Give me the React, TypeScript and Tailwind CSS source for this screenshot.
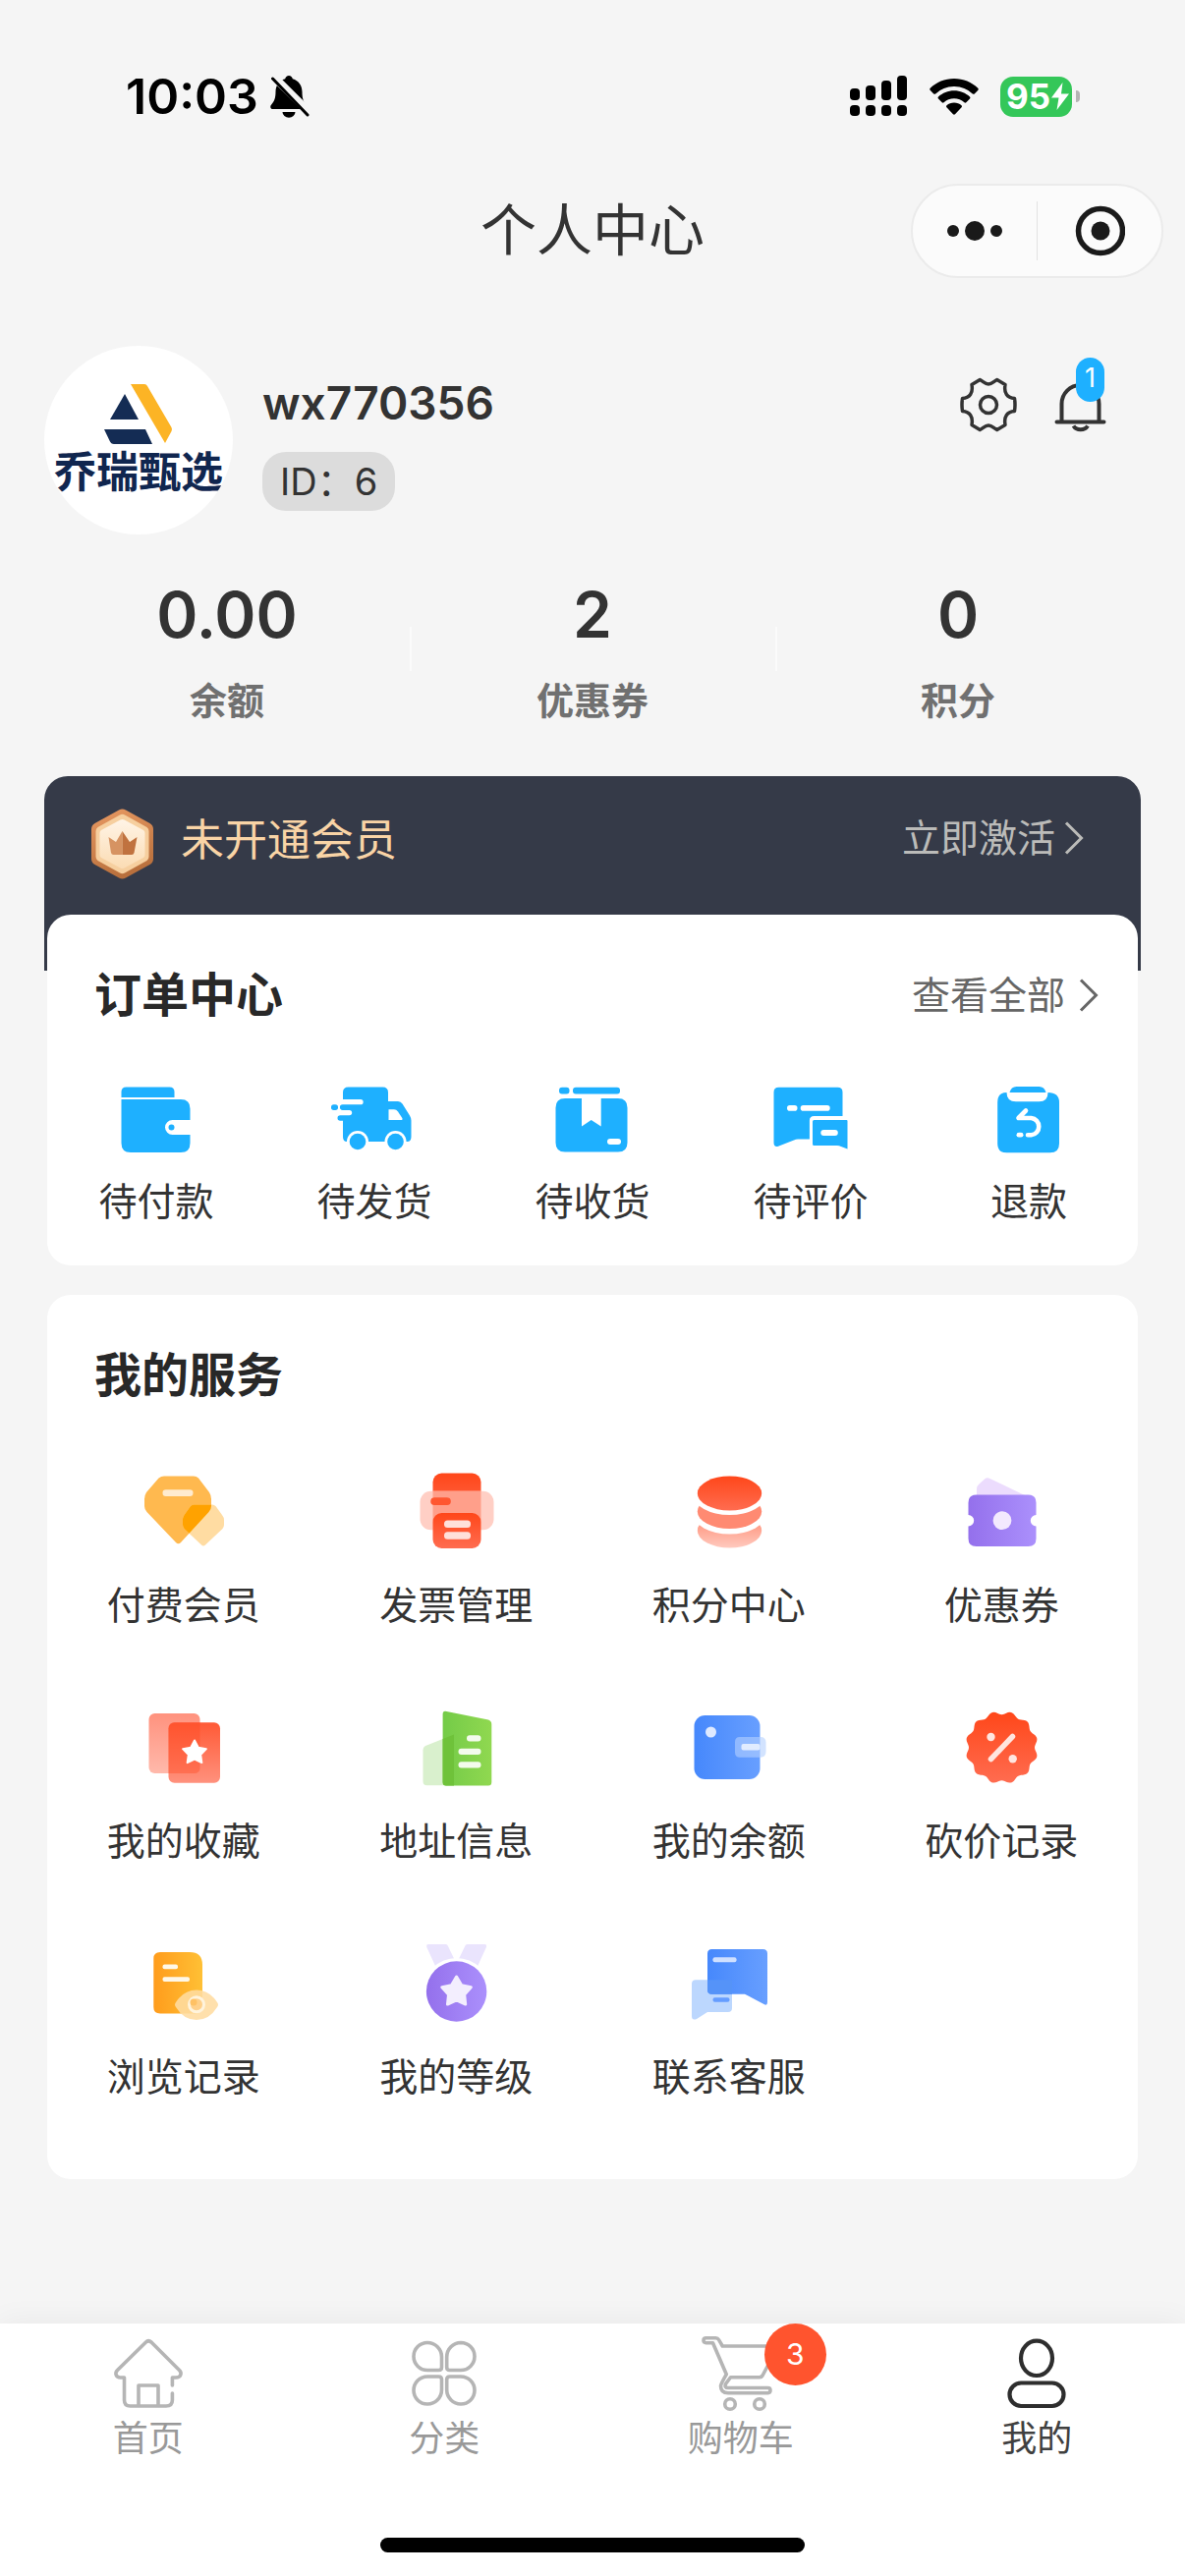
import type { ReactNode } from "react";

interface IconItem {
  label: string;
  icon: ReactNode;
}

const BLUE = "#1eb0ff";

function Chevron({ className }: { className?: string }) {
  return (
    <svg className={className} width="20" height="34" viewBox="0 0 20 34" fill="none" stroke="currentColor" strokeWidth="3">
      <path d="M2 1.5 17.5 17 2 32.5" />
    </svg>
  );
}

/* ---------- status bar ---------- */

function MutedBell() {
  return (
    <svg width="40" height="43" viewBox="0 0 40 43">
      <path d="M19 0c2 0 3.400 1.300 3.800 3.200C29 5 32.500 10 32.500 16.500c0 7 1.500 10.500 4 13.200 1.600 1.800 1.500 4.300-1 4.300H3c-2.800 0-3.600-2.600-1.800-4.500C4 26.500 5.500 23 5.500 16.500 5.500 10 9 5 15.200 3.200 15.600 1.300 17 0 19 0Z" />
      <path d="M12.500 37h13a6.500 5.700 0 0 1-13 0Z" />
      <path d="M1 -1.500 40 37.500" stroke="#f5f5f5" strokeWidth="8" />
      <path d="M2.500 3 38 40" stroke="#000" strokeWidth="3" strokeLinecap="round" />
    </svg>
  );
}

function Signal() {
  return (
    <svg width="59" height="42" viewBox="0 0 59 42">
      <rect x="0" y="13" width="10" height="12" rx="4" />
      <rect x="16" y="10" width="10" height="15" rx="4" />
      <rect x="32" y="5" width="10" height="20" rx="4" />
      <rect x="48" y="0" width="10" height="25" rx="4" />
      <rect x="0" y="30" width="10" height="11" rx="4" />
      <rect x="16" y="30" width="10" height="11" rx="4" />
      <rect x="32" y="30" width="10" height="11" rx="4" />
      <rect x="48" y="30" width="10" height="11" rx="4" />
    </svg>
  );
}

function Wifi() {
  return (
    <svg width="50" height="37" viewBox="0 0 50 37">
      <path d="M25 0c9.500 0 18 3.700 24.300 9.700.6.600.6 1.500.1 2l-3.600 3.700c-.6.500-1.400.5-2 0A26.600 26.600 0 0 0 25 7.900 26.600 26.600 0 0 0 6.200 15.400c-.6.500-1.400.5-2 0L.6 11.700c-.5-.5-.5-1.400.1-2C7 3.700 15.500 0 25 0Z" />
      <path d="M25 12.300c6.200 0 11.800 2.400 16 6.200.6.600.6 1.500 0 2.100l-3.700 3.600c-.5.600-1.300.6-1.900.1A15.500 15.500 0 0 0 25 20.200c-4 0-7.600 1.500-10.400 4.100-.6.500-1.400.5-1.900-.1L9 20.600c-.6-.6-.6-1.500 0-2.100 4.200-3.800 9.800-6.200 16-6.200Z" />
      <path d="M25 24.500c2.900 0 5.500 1 7.500 2.800.6.600.6 1.400.1 2l-6.600 6.900c-.6.600-1.400.6-2 0l-6.600-6.900c-.5-.6-.5-1.400.1-2 2-1.800 4.600-2.800 7.500-2.800Z" />
    </svg>
  );
}

function StatusBar() {
  return (
    <div className="flex h-[128px] items-center justify-between pt-[68px] pr-[107px] pl-[128px]">
      <div className="flex items-center gap-3">
        <span className="text-[50px] leading-[60px] font-semibold text-black">10:03</span>
        <MutedBell />
      </div>
      <div className="flex items-center gap-[22px]">
        <Signal />
        <Wifi />
        <div className="flex items-center gap-1">
          <div className="flex h-[41px] w-[73px] items-center rounded-[13px] bg-[#34c759] pl-[6px] text-white">
            <span className="text-[35px] leading-[41px] font-bold">95</span>
            <svg width="20" height="28" viewBox="0 0 20 28" fill="currentColor">
              <path d="M12.500 0 1 15.500h7.500L6.500 28 19 11.500h-8Z" />
            </svg>
          </div>
          <div className="h-3 w-1 rounded-r-full bg-[#b4b4b4]" />
        </div>
      </div>
    </div>
  );
}

function TitleBar() {
  return (
    <header className="mt-[59px] grid h-24 grid-cols-[1fr_auto_1fr] items-center px-[22px]">
      <h1 className="col-start-2 text-[57px] leading-[80px] text-[#333]">个人中心</h1>
      <div className="flex h-24 w-[257px] items-center justify-self-end rounded-full border-2 border-[#ebebeb] bg-[#fbfbfb]">
        <button aria-label="更多" className="flex flex-1 justify-center">
          <svg width="58" height="20" viewBox="0 0 58 20" fill="#1a1a1a">
            <circle cx="7" cy="10" r="6" />
            <circle cx="29" cy="10" r="10" />
            <circle cx="51" cy="10" r="6" />
          </svg>
        </button>
        <div className="h-[60px] w-px bg-[#e3e3e3]" />
        <button aria-label="关闭" className="flex flex-1 justify-center">
          <svg width="52" height="52" viewBox="-1 0 52 52">
            <circle cx="26" cy="26" r="22.500" fill="none" stroke="#1a1a1a" strokeWidth="5.500" />
            <circle cx="26" cy="26" r="9.500" fill="#1a1a1a" />
          </svg>
        </button>
      </div>
    </header>
  );
}

/* ---------- profile ---------- */

function Avatar() {
  return (
    <div className="flex size-48 shrink-0 flex-col items-center overflow-hidden rounded-full bg-white pt-[38px]">
      <svg width="72" height="62" viewBox="0 0 72 62">
        <path d="M22 11 36 37H7Z" fill="#142c54" />
        <path d="M1 47H43L50 62H11Q8 62 6.500 58.500Z" fill="#142c54" />
        <path d="M28 1H42Q44 1 45 3L69.500 45Q70.500 47 69.500 49L63 61Z" fill="#fcb425" />
      </svg>
      <span className="mt-[3px] text-[43px] leading-[50px] font-bold whitespace-nowrap text-[#10264f]">乔瑞甄选</span>
    </div>
  );
}

function Profile() {
  return (
    <section className="mt-[69px] flex items-start px-[45px]">
      <Avatar />
      <div className="ml-[30px] flex flex-1 flex-col items-start pt-7">
        <h2 className="text-[46px] leading-[60px] font-semibold text-[#333]">wx770356</h2>
        <p className="mt-5 rounded-[24px] bg-[#dcdcdc] px-[18px] text-[38px] leading-[60px] text-[#333]">ID：6</p>
      </div>
      <div className="flex gap-[34px] pt-[30px] pr-[31px] text-[#333]">
        <button aria-label="设置">
          <svg width="60" height="60" viewBox="-30 -30 60 60" fill="none" stroke="currentColor" strokeWidth="3.500" strokeLinejoin="round">
            <path d="M-8.700-25.500C-5-23.500-3.500-21 0-21S5-23.500 8.700-25.500L17-20.500C15.500-12 19-7 26.500-6.500Q27.500 0 26.500 6.500C19 7 15.500 12 17 20.500L8.700 25.500C5 23.500 3.500 21 0 21S-5 23.500-8.700 25.500L-17 20.500C-15.500 12-19 7-26.500 6.500Q-27.500 0-26.500-6.500C-19-7-15.500-12-17-20.500Z" />
            <circle r="8.500" />
          </svg>
        </button>
        <button aria-label="消息" className="relative">
          <svg width="60" height="60" viewBox="0 -4 60 60" fill="none" stroke="currentColor" strokeWidth="4" strokeLinecap="round">
            <path d="M10.500 43V25a19 19 0 0 1 38 0v18M5.500 43.500h48" />
            <path d="M22.500 47.500c3 5 11.500 5 14.500 0" strokeLinecap="butt" />
          </svg>
          <span className="absolute -top-[18px] left-[25px] h-[45px] w-[29px] rounded-full bg-[#1eb0ff] text-center text-[27px] leading-[41px] text-white">1</span>
        </button>
      </div>
    </section>
  );
}

const stats = [
  { value: "0.00", label: "余额" },
  { value: "2", label: "优惠券" },
  { value: "0", label: "积分" },
];

function Stats() {
  return (
    <section className="mx-[45px] mt-[50px] grid grid-cols-3">
      {stats.map((s, i) => (
        <button key={s.label} className="relative flex flex-col items-center">
          <span className="text-[64px] leading-[64px] font-semibold text-[#333]">{s.value}</span>
          <span className="mt-[31px] text-[38px] leading-[48px] font-bold text-[#707070]">{s.label}</span>
          {i < 2 && <span className="absolute top-11 -right-0.5 h-[45px] w-0.5 bg-[#fbfbfb]" />}
        </button>
      ))}
    </section>
  );
}

function VipBanner() {
  return (
    <section className="mx-[45px] mt-[53px] flex items-start justify-between rounded-t-[24px] bg-[#353a48] pt-[33px] pr-[58px] pb-[93px] pl-12">
      <div className="flex items-start gap-7">
        <svg width="63" height="72" viewBox="0 0 63 72">
          <defs>
            <linearGradient id="vipRim" x1="0" y1="0" x2="0.300" y2="1">
              <stop offset="0" stopColor="#e99a63" />
              <stop offset="1" stopColor="#b9703d" />
            </linearGradient>
            <linearGradient id="vipFace" x1="0" y1="0" x2="0" y2="1">
              <stop offset="0" stopColor="#fff4e6" />
              <stop offset="1" stopColor="#fbdcb4" />
            </linearGradient>
          </defs>
          <path d="M28 1.500Q31.500-.5 35 1.500L59.500 15Q63 17 63 21V51Q63 55 59.500 57L35 70.500Q31.500 72.500 28 70.500L3.500 57Q0 55 0 51V21Q0 17 3.500 15Z" fill="url(#vipRim)" />
          <path d="M29 6.500Q31.500 5 34 6.500L56.500 19Q58.500 20.500 58.500 23V49Q58.500 51.500 56.500 53L34 65.500Q31.500 67 29 65.500L6.500 53Q4.500 51.500 4.500 49V23Q4.500 20.500 6.500 19Z" fill="#f6cf9f" />
          <path d="M29.500 11.500Q31.500 10.500 33.500 11.500L53 22Q54.500 23 54.500 25V47Q54.500 49 53 50L33.500 60.500Q31.500 61.500 29.500 60.500L10 50Q8.500 49 8.500 47V25Q8.500 23 10 22Z" fill="url(#vipFace)" />
          <path d="M17.500 29 25 34 31.500 23V47H22.500Q20.500 47 20 45Z" fill="#d69362" />
          <path d="M46.500 29 39 34 31.500 23V47H41Q43 47 43.500 45Z" fill="#c0723f" />
        </svg>
        <span className="text-[44px] leading-[64px] text-[#f9d4a6]">未开通会员</span>
      </div>
      <button className="flex items-center gap-[9px] text-[39px] leading-[60px] text-[#bbbbb9]">
        立即激活
        <Chevron />
      </button>
    </section>
  );
}

/* ---------- order center ---------- */

const orders: IconItem[] = [
  {
    label: "待付款",
    icon: (
      <>
        <path d="M12.500 11V5.500q0-5 5-5h44q5 0 5 5V11Z" fill={BLUE} />
        <path d="M12.500 13H73q9.500 0 9.500 9.500V34h-18a7.500 7.500 0 0 0 0 15h18v8.500q0 9.500-9.500 9.500H22q-9.500 0-9.500-9.500Z" fill={BLUE} />
        <circle cx="63.500" cy="41.500" r="3" fill={BLUE} />
      </>
    ),
  },
  {
    label: "待发货",
    icon: (
      <>
        <path d="M16 13V6q0-5.500 5.500-5.500h35q5.500 0 5.500 5.500v9h10q3 0 4.500 2.500L84 29.500q1.500 2.500 1.500 5V51q0 5-4 5H20q-4 0-4-5V34.700H13.200a2.700 2.700 0 0 1 0-5.400H22.500a2.700 2.700 0 0 0 0-5.400H15.700a2.800 2.800 0 0 1 0-5.600H34a2.650 2.650 0 0 0 0-5.300Z" fill={BLUE} />
        <rect x="4" y="18.300" width="7" height="5.600" rx="2.700" fill={BLUE} />
        <path d="M62.500 23.300h5.500q2.500 0 4 2.200l4.300 6.500q1 2-1.300 2H62.500Z" fill="#fff" />
        <circle cx="31" cy="56" r="11" fill="#fff" />
        <circle cx="69.500" cy="56" r="11" fill="#fff" />
        <circle cx="31" cy="56" r="8.300" fill={BLUE} />
        <circle cx="69.500" cy="56" r="8.300" fill={BLUE} />
      </>
    ),
  },
  {
    label: "待收货",
    icon: (
      <>
        <rect x="14" y=".7" width="10.500" height="6.800" rx="3" fill={BLUE} />
        <rect x="28" y=".7" width="48" height="6.800" rx="3" fill={BLUE} />
        <path d="M20 12H37V40.500L46.700 34 56.700 40.500V12H74q9.500 0 9.500 9.500V57q0 9.500-9.500 9.500H20q-9.500 0-9.500-9.500V21.500Q10.500 12 20 12Z" fill={BLUE} />
        <rect x="63" y="53" width="14" height="6" rx="3" fill="#fff" />
      </>
    ),
  },
  {
    label: "待评价",
    icon: (
      <>
        <path d="M15.500.7h60q5 0 5 5V30H51.500q-4.600 0-4.600 4.500V53.500H35q-2 0-4 1L15 60.700q-4.500 1-4.500-3.700V5.700q0-5 5-5Z" fill={BLUE} />
        <path d="M51.500 34h33q1 0 1 1v28.500L77 60.300 75 60H51.500q-1.500 0-1.500-1.500v-23Q50 34 51.500 34Z" fill={BLUE} />
        <rect x="24" y="19" width="10.500" height="5.700" rx="2.800" fill="#fff" />
        <rect x="37.700" y="19" width="30" height="5.700" rx="2.800" fill="#fff" />
        <rect x="58.300" y="44" width="17.500" height="6" rx="3" fill="#fff" />
      </>
    ),
  },
  {
    label: "退款",
    icon: (
      <>
        <path d="M28.500 6q1.500-6 7-6h23q5.500 0 7 6Z" fill={BLUE} />
        <path d="M25.500 6q0 9.300 9.500 9.300h23.500q9 0 9-9.300 11.500 0 11.500 10V58q0 9.300-9.300 9.300H25.500q-9.300 0-9.300-9.300V16q0-10 9.300-10Z" fill={BLUE} />
        <path d="M45 24.500 37.500 32H50.500a8.700 8.700 0 0 1 0 17.300H47" fill="none" stroke="#fff" strokeWidth="4.600" strokeLinecap="round" strokeLinejoin="round" />
        <rect x="35.500" y="46.800" width="7" height="4.800" rx="2.400" fill="#fff" />
      </>
    ),
  },
];

function OrderCenter() {
  return (
    <section className="relative mx-12 -mt-[57px] rounded-[24px] bg-white pt-[50px] pb-[41px]">
      <div className="flex items-center justify-between pr-10 pl-12">
        <h2 className="text-[48px] leading-[64px] font-bold text-[#282828]">订单中心</h2>
        <button className="flex items-center gap-[14px] text-[39px] leading-[60px] text-[#666]">
          查看全部
          <Chevron />
        </button>
      </div>
      <div className="mt-[61px] grid grid-cols-5">
        {orders.map(o => (
          <button key={o.label} className="flex flex-col items-center">
            <svg width="96" height="68" viewBox="0 0 96 68">{o.icon}</svg>
            <span className="mt-[25px] text-[39px] leading-[48px] text-[#333]">{o.label}</span>
          </button>
        ))}
      </div>
    </section>
  );
}

/* ---------- services ---------- */

// outline of a seal with rounded teeth
function sealPath(cx: number, cy: number, r: number, depth: number, teeth: number) {
  const steps = teeth * 12;
  const points = Array.from({ length: steps }, (_, i) => {
    const a = (i / steps) * Math.PI * 2;
    const radius = r - depth * (0.5 + 0.5 * Math.cos(teeth * a));
    return `${(cx + radius * Math.cos(a)).toFixed(2)} ${(cy + radius * Math.sin(a)).toFixed(2)}`;
  });
  return `M${points.join("L")}Z`;
}

function starPath(cx: number, cy: number, outer: number, inner: number) {
  const points = Array.from({ length: 10 }, (_, i) => {
    const a = (i * Math.PI) / 5 - Math.PI / 2;
    const radius = i % 2 ? inner : outer;
    return `${(cx + radius * Math.cos(a)).toFixed(2)} ${(cy + radius * Math.sin(a)).toFixed(2)}`;
  });
  return `M${points.join("L")}Z`;
}

function Gradients() {
  const list = [
    { id: "redDown", from: "#ff471a", to: "#ff6c50", down: true },
    { id: "redFade", from: "#ff8469", to: "#ffcabf", down: true },
    { id: "redCard", from: "#ff5a36", to: "#ff917d", down: true },
    { id: "redBack", from: "#ff927e", to: "#ffb9ab", down: true },
    { id: "purple", from: "#9470ec", to: "#ab90fc", down: false },
    { id: "green", from: "#74cb48", to: "#90d850", down: false },
    { id: "blue", from: "#4688fc", to: "#689fff", down: false },
    { id: "orange", from: "#ff9c1c", to: "#ffc035", down: false },
  ];
  return (
    <svg width="0" height="0" className="absolute" aria-hidden="true">
      <defs>
        {list.map(g => (
          <linearGradient key={g.id} id={g.id} x1="0" y1="0" x2={g.down ? 0 : 1} y2={g.down ? 1 : 0}>
            <stop offset="0" stopColor={g.from} />
            <stop offset="1" stopColor={g.to} />
          </linearGradient>
        ))}
        <clipPath id="gemClip">
          <path d="M28 12.500H58Q61 12.500 63 14.500L74 29Q76 32 76 36V43Q76 46.500 73.500 49L45 80Q42.500 82.500 40 80L10.500 49Q8 46.500 8 43V36Q8 32 10 29L22.500 14.500Q25 12.500 28 12.500Z" />
        </clipPath>
      </defs>
    </svg>
  );
}

const services: IconItem[] = [
  {
    label: "付费会员",
    icon: (
      <>
        <path d="M28 12.500H58Q61 12.500 63 14.500L74 29Q76 32 76 36V43Q76 46.500 73.500 49L45 80Q42.500 82.500 40 80L10.500 49Q8 46.500 8 43V36Q8 32 10 29L22.500 14.500Q25 12.500 28 12.500Z" fill="#ffb94f" />
        <path d="M58 41.500H77Q79 41.500 80.500 43L87 52Q89 54.500 89 57V62Q89 64 87.500 66L70 82.500Q68 84.500 66 82.500L48.500 66Q47 64 47 62V57Q47 54.500 48.500 52L55 43Q56.500 41.500 58 41.500Z" fill="#ffdca2" />
        <path clipPath="url(#gemClip)" d="M58 41.500H77Q79 41.500 80.500 43L87 52Q89 54.500 89 57V62Q89 64 87.500 66L70 82.500Q68 84.500 66 82.500L48.500 66Q47 64 47 62V57Q47 54.500 48.500 52L55 43Q56.500 41.500 58 41.500Z" fill="#ffa200" />
        <rect x="26.500" y="26.300" width="31" height="6.700" rx="3.300" fill="#ffebcf" />
      </>
    ),
  },
  {
    label: "发票管理",
    icon: (
      <>
        <rect x="24.500" y="9.500" width="49" height="50" rx="9" fill="url(#redDown)" />
        <rect x="11.500" y="27.700" width="75" height="39.500" rx="11" fill="#ffcfc5" />
        <rect x="24.500" y="27.700" width="49" height="30" fill="#ff9f8a" />
        <rect x="22.300" y="34.300" width="20.500" height="7.700" rx="3.800" fill="#ff5730" />
        <rect x="24.500" y="50" width="49" height="36" rx="9" fill="url(#redDown)" />
        <rect x="36" y="57.500" width="27" height="7.500" rx="3.500" fill="#ffe0da" />
        <rect x="36" y="69.300" width="27" height="7.500" rx="3.500" fill="#ffe0da" />
      </>
    ),
  },
  {
    label: "积分中心",
    icon: (
      <>
        <ellipse cx="48.500" cy="68" rx="32.700" ry="17.500" fill="url(#redFade)" />
        <ellipse cx="48.500" cy="51" rx="37" ry="20.500" fill="#fff" />
        <ellipse cx="48.500" cy="48.500" rx="32.700" ry="17.500" fill="#ff8a72" />
        <ellipse cx="48.500" cy="31.500" rx="37" ry="20.500" fill="#fff" />
        <ellipse cx="48.500" cy="30" rx="32.700" ry="17.500" fill="url(#redDown)" />
      </>
    ),
  },
  {
    label: "优惠券",
    icon: (
      <>
        <path d="M23 33V25.500Q23 22.500 25.500 20.500L31 15.500Q33.500 13.500 36.500 15L74 33Z" fill="#ecdcfd" />
        <path d="M22.500 31.500h53q8 0 8 8V52a5.700 5.700 0 0 0 0 11.400V76q0 8-8 8h-53q-8 0-8-8V63.400a5.700 5.700 0 0 0 0-11.400V39.500q0-8 8-8Z" fill="url(#purple)" />
        <circle cx="49" cy="57.700" r="9.400" fill="#f3e9fe" />
      </>
    ),
  },
  {
    label: "我的收藏",
    icon: (
      <>
        <rect x="12.500" y="14" width="52" height="61" rx="6" fill="url(#redBack)" />
        <rect x="32.500" y="23.300" width="52.500" height="61.500" rx="6" fill="url(#redCard)" />
        <path d="M32.500 29.300q0-6 6-6h26V69q0 6-6 6h-26Z" fill="#ff4a24" opacity=".4" />
        <path d={starPath(59, 54, 12.500, 6.500)} fill="#fff" stroke="#fff" strokeWidth="2" strokeLinejoin="round" />
      </>
    ),
  },
  {
    label: "地址信息",
    icon: (
      <>
        <path d="M14.500 83V51.500Q14.500 48.500 17 47L46 35.500V87.300H18.500Q14.500 87.300 14.500 83Z" fill="#d9f0cd" />
        <path d="M34.600 84V15Q34.600 11 38.500 12L81 20.500Q84.300 21.500 84.300 25V84Q84.300 87.500 81 87.500H38Q34.600 87.500 34.600 84Z" fill="url(#green)" />
        <path d="M34.600 40 46 35.500V87.500H38Q34.600 87.500 34.600 84Z" fill="#6fc23a" />
        <rect x="59" y="36.300" width="14.500" height="6.300" rx="3" fill="#f3fbec" />
        <rect x="50.500" y="49.700" width="23" height="6.300" rx="3" fill="#f3fbec" />
        <rect x="50.500" y="63.300" width="23" height="6.300" rx="3" fill="#f3fbec" />
      </>
    ),
  },
  {
    label: "我的余额",
    icon: (
      <>
        <rect x="12.500" y="16" width="67" height="65" rx="11" fill="url(#blue)" />
        <circle cx="29.500" cy="33" r="5.500" fill="#dfeaff" />
        <path d="M59 38H80Q85.500 38 85.500 43.500V53Q85.500 58.700 80 58.700H59Q54 58.700 54 53.700V43Q54 38 59 38Z" fill="#b4d0ff" opacity=".6" />
        <rect x="60.500" y="45" width="19" height="6.500" rx="2" fill="#e1ecff" />
      </>
    ),
  },
  {
    label: "砍价记录",
    icon: (
      <>
        <path d={sealPath(48.500, 48.700, 37, 3.500, 12)} fill="url(#redDown)" />
        <path d="M59.500 37.500 37.500 60.500" stroke="#ffe5df" strokeWidth="5.500" strokeLinecap="round" />
        <circle cx="37.500" cy="38" r="4.200" fill="#ffe5df" />
        <circle cx="59.700" cy="60.300" r="4.200" fill="#ffe5df" />
      </>
    ),
  },
  {
    label: "浏览记录",
    icon: (
      <>
        <path d="M24 17H54Q67 17 67 30V73Q67 79.500 60.500 79.500H24Q17.300 79.500 17.300 73V23.500Q17.300 17 24 17Z" fill="url(#orange)" />
        <rect x="26.500" y="29.500" width="15.500" height="4.700" rx="2" fill="#fff8e8" />
        <rect x="26.500" y="42.300" width="27.500" height="4.700" rx="2" fill="#fff8e8" />
        <path d="M40 68Q48 55.500 61 55.500T82 68Q84 70.500 82 73 74 86 61 86T40 73Q38 70.500 40 68Z" fill="#ffdca0" opacity=".88" />
        <circle cx="61" cy="70.300" r="7.500" fill="#ffd08a" stroke="#fff3dc" strokeWidth="3" />
        <circle cx="58" cy="68" r="3.500" fill="#ffc164" />
      </>
    ),
  },
  {
    label: "我的等级",
    icon: (
      <>
        <path d="M20 9H37.500Q39.500 9 40 11L46.800 25Q36 25 27 31L18.300 12Q17.500 9 20 9Z" fill="#eae4fd" />
        <path d="M77.200 9H59.700Q57.700 9 57.200 11L50.400 25Q61 25 70.200 31L78.900 12Q79.700 9 77.200 9Z" fill="#eae4fd" />
        <circle cx="48.600" cy="57" r="34" fill="#fff" />
        <circle cx="48.600" cy="57" r="30.700" fill="url(#purple)" />
        <path d={starPath(48.600, 57.500, 15.500, 8.500)} fill="#f3eefe" stroke="#f3eefe" strokeWidth="3" strokeLinejoin="round" />
      </>
    ),
  },
  {
    label: "联系客服",
    icon: (
      <>
        <path d="M14 45.300H51V74Q51 78 47 78H26L15 85Q10 87 10 82V49.300Q10 45.300 14 45.300Z" fill="#bcd7fe" />
        <path d="M30.500 14H82.500Q87 14 87 18.500V68Q87 72 83.500 70L64 59.700H30.500Q26 59.700 26 55.200V18.500Q26 14 30.500 14Z" fill="url(#blue)" />
        <path d="M26 45.300H51V59.700H30.500Q26 59.700 26 55.200Z" fill="#5593f8" />
        <rect x="31.500" y="22.300" width="24" height="5" rx="2" fill="#cfe0ff" />
        <rect x="31.500" y="63.300" width="17" height="4.500" rx="2" fill="#659dff" />
      </>
    ),
  },
];

function Services() {
  return (
    <section className="mx-12 mt-[30px] rounded-[24px] bg-white pt-[50px] pb-20">
      <h2 className="pl-12 text-[48px] leading-[64px] font-bold text-[#282828]">我的服务</h2>
      <div className="mt-[58px] grid grid-cols-4 gap-y-[72px]">
        {services.map(s => (
          <button key={s.label} className="flex flex-col items-center">
            <svg width="96" height="96" viewBox="0 0 96 96">{s.icon}</svg>
            <span className="mt-6 text-[39px] leading-[48px] text-[#333]">{s.label}</span>
          </button>
        ))}
      </div>
    </section>
  );
}

/* ---------- tab bar ---------- */

const tabs: (IconItem & { badge?: number; active?: boolean })[] = [
  {
    label: "首页",
    icon: (
      <path d="M66.400 53V45H70c5 0 6.500-4.500 3.500-7.500L45 9q-3-2.500-5.500 0L10.500 37.500c-3 3-1.500 7.500 3 7.500H17.500V68q0 6 6 6H60q6.400 0 6.400-6V61M32 74V53H52V74" />
    ),
  },
  {
    label: "分类",
    icon: (
      <path d="M25 9.500A14.500 14.500 0 0 1 39.500 24V34.500Q39.500 37.500 36.500 37.500H25A14 14 0 0 1 25 9.500ZM59 9.500A14.500 14.500 0 0 0 44.700 24V34.500Q44.700 37.500 47.700 37.500H59A14 14 0 0 0 59 9.500ZM25 72A14.500 14.500 0 0 0 39.500 57.500V47Q39.500 44 36.500 44H25A14 14 0 0 0 25 72ZM59 72A14.500 14.500 0 0 1 44.700 57.500V47Q44.700 44 47.700 44H59A14 14 0 0 1 59 72Z" />
    ),
  },
  {
    label: "购物车",
    badge: 3,
    icon: (
      <>
        <path d="M13.500 9.700H6.500Q4 9.700 4 7.200T6.500 4.700H16.500Q18.500 4.700 19.500 6.500L23.300 13H77Q80 13 78.500 16L64 43Q63 44.700 61 44.700H31.500L26.500 51.500Q25 55.500 29 55.500H69.500Q72 55.500 72 58T69.500 60.700H29Q21.500 60.700 21.500 53.500 21.500 52 27.300 41.700Z" />
        <circle cx="31" cy="72" r="5.300" />
        <circle cx="61" cy="72" r="5.300" />
      </>
    ),
  },
  {
    label: "我的",
    active: true,
    icon: (
      <>
        <ellipse cx="42" cy="25.300" rx="16" ry="17.700" />
        <rect x="14.500" y="50.500" width="55" height="23.500" rx="11.700" />
      </>
    ),
  },
];

function TabBar() {
  return (
    <nav className="mt-auto bg-white pt-[10px] pb-6 shadow-[0_0_30px_rgba(0,0,0,0.06)]">
      <div className="grid grid-cols-4">
        {tabs.map(t => (
          <a key={t.label} href="#" className={t.active ? "flex flex-col items-center text-[#404040]" : "flex flex-col items-center text-[#999]"}>
            <span className="relative">
              <svg
                width="84"
                height="80"
                viewBox="0 0 84 80"
                fill="none"
                stroke={t.active ? "#2e2e2e" : "#b5b5b5"}
                strokeWidth={t.active ? 4.2 : 3.6}
                strokeLinecap="round"
                strokeLinejoin="round"
              >
                {t.icon}
              </svg>
              {t.badge && (
                <span className="absolute -top-[10px] left-[66px] size-[63px] rounded-full bg-[#ff542e] text-center text-[30px] leading-[63px] text-white">{t.badge}</span>
              )}
            </span>
            <span className="mt-[5px] text-[36px] leading-[44px]">{t.label}</span>
          </a>
        ))}
      </div>
      <div className="mx-auto mt-[79px] h-[15px] w-[432px] rounded-full bg-black" />
    </nav>
  );
}

export default function App() {
  return (
    <div className="flex min-h-screen flex-col bg-[#f5f5f5] font-['Inter','Noto_Sans_CJK_SC',sans-serif]">
      <Gradients />
      <StatusBar />
      <TitleBar />
      <main>
        <Profile />
        <Stats />
        <VipBanner />
        <OrderCenter />
        <Services />
      </main>
      <TabBar />
    </div>
  );
}
